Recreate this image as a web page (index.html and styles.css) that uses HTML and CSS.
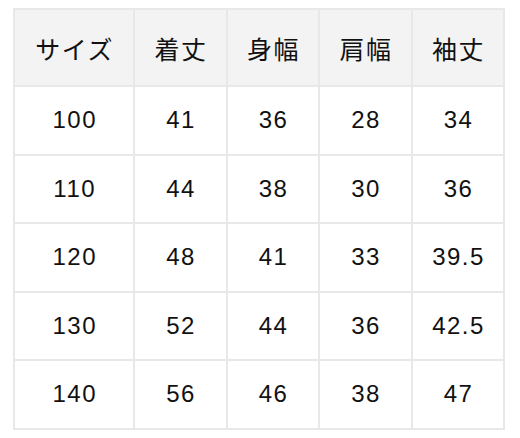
FILE: index.html
```html
<!DOCTYPE html>
<html lang="ja">
<head>
<meta charset="utf-8">
<link rel="stylesheet" href="styles.css">
</head>
<body>
<table class="size-table">
  <colgroup>
    <col class="col-size">
    <col><col><col><col>
  </colgroup>
  <thead>
    <tr class="head-row">
      <th>サイズ</th><th>着丈</th><th>身幅</th><th>肩幅</th><th>袖丈</th>
    </tr>
  </thead>
  <tbody>
    <tr><td>100</td><td>41</td><td>36</td><td>28</td><td>34</td></tr>
    <tr><td>110</td><td>44</td><td>38</td><td>30</td><td>36</td></tr>
    <tr><td>120</td><td>48</td><td>41</td><td>33</td><td>39.5</td></tr>
    <tr><td>130</td><td>52</td><td>44</td><td>36</td><td>42.5</td></tr>
    <tr><td>140</td><td>56</td><td>46</td><td>38</td><td>47</td></tr>
  </tbody>
</table>
</body>
</html>
```
FILE: styles.css
```css
html, body {
  margin: 0;
  padding: 0;
  background: #ffffff;
}

body {
  padding: 8px 0 0 13px;
}

.size-table {
  border-collapse: collapse;
  width: 492px;
  table-layout: fixed;
  font-family: "Liberation Sans", "Noto Sans CJK JP", sans-serif;
  font-size: 24px;
  color: #111111;
}

.col-size {
  width: 120px;
}

.size-table th,
.size-table td {
  border: 2px solid #e8e8e8;
  padding: 0;
  text-align: center;
  vertical-align: middle;
  letter-spacing: 1.5px;
  text-indent: 1.5px;
}

.size-table th {
  font-weight: normal;
  background: #f3f3f3;
  font-size: 25px;
  letter-spacing: 1.5px;
  text-indent: 1.5px;
}

.head-row {
  height: 77px;
}

.size-table tbody tr {
  height: 68.5px;
}
```
